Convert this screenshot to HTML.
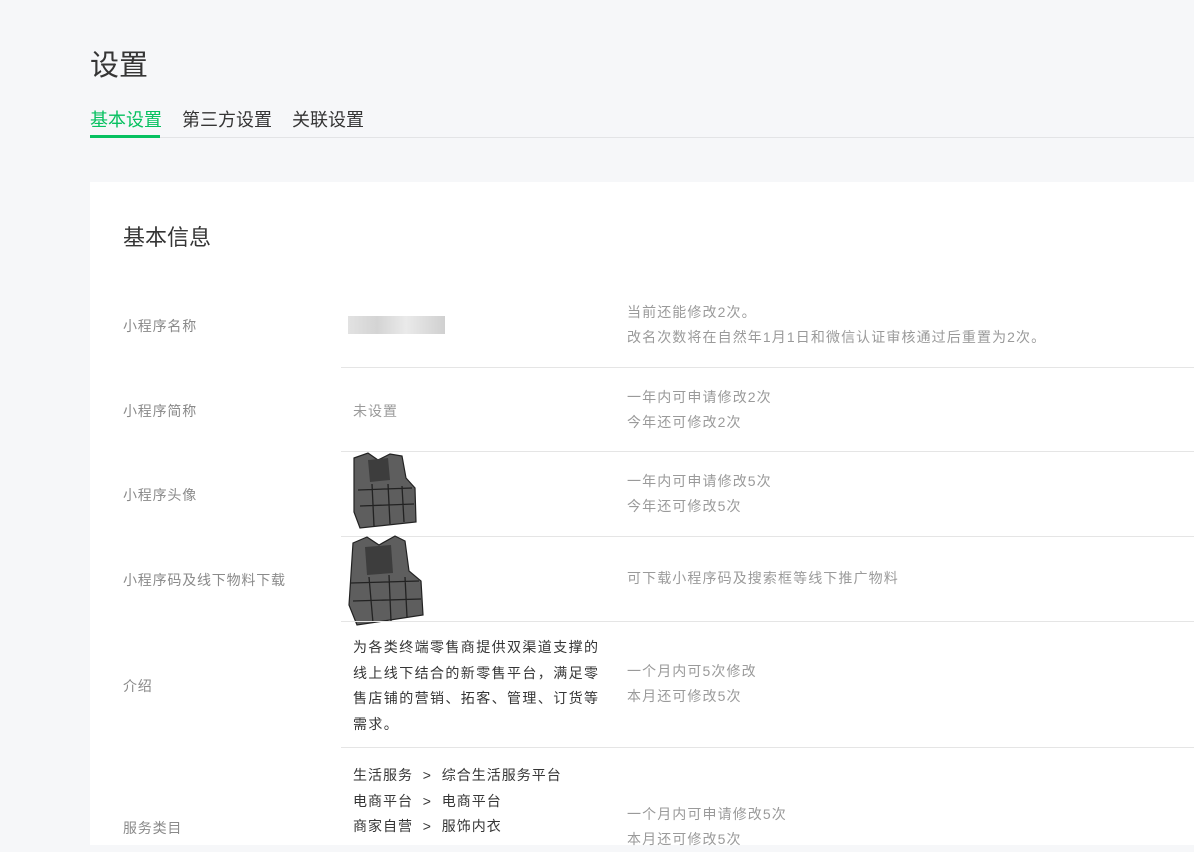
<!DOCTYPE html>
<html><head><meta charset="utf-8"><style>
*{margin:0;padding:0;box-sizing:border-box}
body{width:1194px;height:845px;overflow:hidden;background:#f6f7f9;font-family:"Liberation Sans","Noto Sans CJK SC",sans-serif;position:relative}
.t{position:absolute;white-space:nowrap}
.lbl{position:absolute;left:123px;font-size:14px;color:#8a8a8a;letter-spacing:0.8px}
.g{position:absolute;left:627px;font-size:14px;color:#9a9a9a;line-height:25px;letter-spacing:1.1px;white-space:nowrap}
.v{position:absolute;left:353px;font-size:14px;color:#353535;line-height:25.5px;letter-spacing:1px}
.hr{position:absolute;left:341px;right:0;height:1px;background:#e5e5e5}
</style></head><body>
<div class="t" style="left:90px;top:42px;font-size:29px;color:#353535">设置</div>
<div class="t" style="left:90px;top:106px;font-size:18px;color:#07c160">基本设置</div>
<div class="t" style="left:182px;top:106px;font-size:18px;color:#353535">第三方设置</div>
<div class="t" style="left:292px;top:106px;font-size:18px;color:#353535">关联设置</div>
<div style="position:absolute;left:90px;right:0;top:137px;height:1px;background:#e3e4e6"></div>
<div style="position:absolute;left:90px;top:135px;width:70px;height:3px;background:#07c160"></div>
<div style="position:absolute;left:90px;top:182px;right:0;bottom:0;background:#fff"></div>
<div class="t" style="left:123px;top:220px;font-size:22px;color:#353535">基本信息</div>

<div class="lbl" style="top:316px">小程序名称</div>
<div style="position:absolute;left:348px;top:316px;width:97px;height:18px;background:linear-gradient(90deg,#e2e2e2,#d4d4d4 30%,#eaeaea 60%,#d0d0d0)"></div>
<div class="g" style="top:300px">当前还能修改2次。<br>改名次数将在自然年1月1日和微信认证审核通过后重置为2次。</div>
<div class="hr" style="top:367px"></div>

<div class="lbl" style="top:401px">小程序简称</div>
<div class="t" style="left:353px;top:401px;font-size:14px;color:#9a9a9a;letter-spacing:1px">未设置</div>
<div class="g" style="top:385px">一年内可申请修改2次<br>今年还可修改2次</div>
<div class="hr" style="top:451px"></div>

<div class="lbl" style="top:485px">小程序头像</div>
<svg style="position:absolute;left:350px;top:450px" width="68" height="80" viewBox="0 0 68 80"><path d="M4 8 L18 3 L28 10 L40 4 L52 6 L56 28 L65 38 L66 72 L10 78 L4 62 Z" fill="#5e5e5e" stroke="#222" stroke-width="1.2"/><path d="M18 10 L38 8 L40 30 L20 32Z" fill="#3d3d3d"/><path d="M8 40 L62 38 M10 56 L64 54 M22 34 L24 76 M38 34 L40 74 M52 36 L54 72" stroke="#222" stroke-width="1.3"/></svg>
<div class="g" style="top:469px">一年内可申请修改5次<br>今年还可修改5次</div>
<div class="hr" style="top:536px"></div>

<div class="lbl" style="top:570px">小程序码及线下物料下载</div>
<svg style="position:absolute;left:347px;top:533px" width="80" height="94" viewBox="0 0 80 94"><path d="M6 10 L20 4 L32 12 L48 3 L58 8 L62 38 L74 48 L76 82 L10 92 L2 72 Z" fill="#5e5e5e" stroke="#222" stroke-width="1.2"/><path d="M18 14 L44 12 L46 40 L20 42Z" fill="#3d3d3d"/><path d="M4 50 L72 48 M6 68 L74 66 M22 44 L26 90 M42 42 L44 88 M58 44 L60 84" stroke="#222" stroke-width="1.3"/></svg>
<div class="g" style="top:566px">可下载小程序码及搜索框等线下推广物料</div>
<div class="hr" style="top:621px"></div>

<div class="lbl" style="top:676px">介绍</div>
<div class="v" style="top:635px;width:252px;white-space:normal;letter-spacing:1.4px">为各类终端零售商提供双渠道支撑的线上线下结合的新零售平台，满足零售店铺的营销、拓客、管理、订货等需求。</div>
<div class="g" style="top:659px">一个月内可5次修改<br>本月还可修改5次</div>
<div class="hr" style="top:747px"></div>

<div class="lbl" style="top:818px">服务类目</div>
<div class="v" style="top:763px;white-space:nowrap">生活服务 &nbsp;&gt;&nbsp; 综合生活服务平台<br>电商平台 &nbsp;&gt;&nbsp; 电商平台<br>商家自营 &nbsp;&gt;&nbsp; 服饰内衣</div>
<div class="g" style="top:802px">一个月内可申请修改5次<br>本月还可修改5次</div>
</body></html>
